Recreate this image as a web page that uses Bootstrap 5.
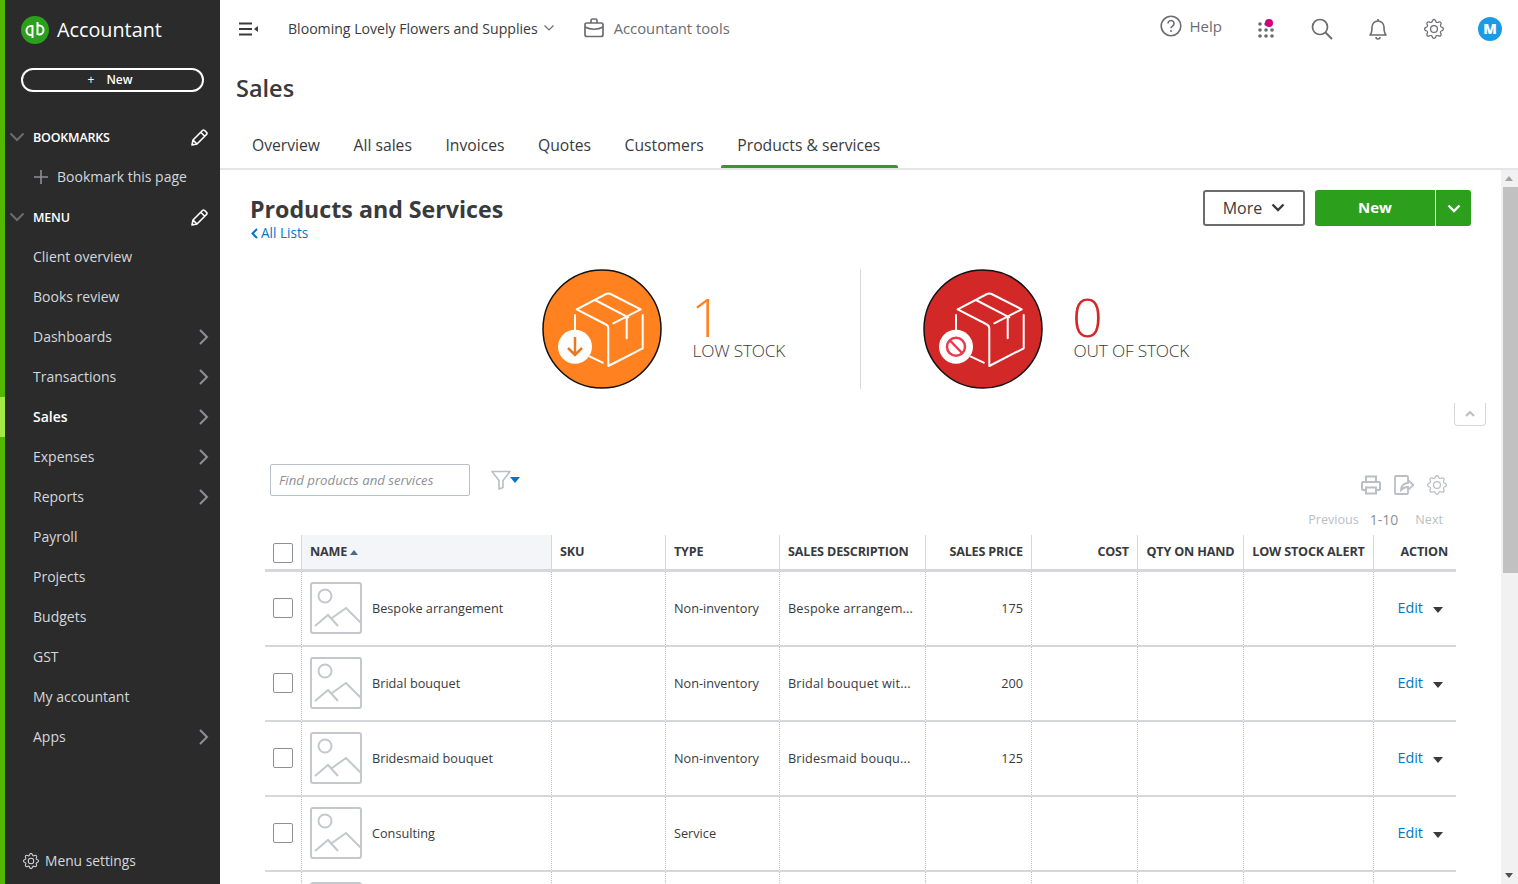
<!doctype html>
<html lang="en">
<head>
<meta charset="utf-8">
<title>Products and Services</title>
<link rel="stylesheet" href="https://cdn.jsdelivr.net/npm/bootstrap@5.3.0/dist/css/bootstrap.min.css">
<style>
html,body{height:884px;overflow:hidden}
body{font-family:"Open Sans","Liberation Sans",sans-serif;color:#393a3d;font-size:14px;background:#fff}
svg{display:block;flex:none}
.qb-side{width:220px;height:884px;flex:none;background:#2b2b2b;border-left:5px solid #53b700;color:#d4d7dc;position:relative}
.qb-brand{height:60px;padding-left:16px;padding-top:16px;color:#fff;font-size:19.8px;gap:8px;line-height:28px}
.qb-new{display:flex;margin:8px 16px 0 16px;width:183px;height:24px;border:2px solid #fff;border-radius:12px;color:#fff;font-size:12px;font-weight:600;align-items:center;justify-content:center;gap:12px;text-decoration:none;line-height:1;padding-right:5px}
.qb-sec{height:40px;padding-left:28px;padding-right:12px;padding-top:2px;display:flex;align-items:center;justify-content:space-between;color:#fff;font-size:12.5px;font-weight:600;position:relative;letter-spacing:-.2px}
.qb-sec>.qb-chev{position:absolute;left:4px;top:15px}
.qb-item{height:40px;padding-left:28px;padding-right:10px;padding-bottom:2px;display:flex;align-items:center;justify-content:space-between;color:#d4d7dc;text-decoration:none;font-size:14px;position:relative}
.qb-item>svg{margin-top:2px}
.qb-active{color:#fff;font-weight:600}
.qb-active::before{content:"";position:absolute;left:-5px;top:0;bottom:0;width:5px;background:#a4e843}
.qb-foot{position:absolute;left:18px;bottom:11px;gap:6px;color:#d4d7dc;line-height:24px;font-size:13.8px}
.qb-main{width:1298px;height:884px;flex:none;display:flex;flex-direction:column}
.qb-top{height:58px;padding-left:18px;padding-right:0;flex:none}
.qb-co{margin-left:30px;font-size:14.1px;font-weight:500;color:#393a3d;gap:6px;padding-bottom:1px}
.qb-tools{margin-left:30px;color:#6b6c72;font-size:14.8px;gap:10px;padding-bottom:2px}
.qb-right{gap:0}
.qb-help{color:#6b6c72;font-size:15px;gap:8px;margin-right:16px}
.qb-ic{width:56px;display:flex;justify-content:center;position:relative}
.qb-dot{position:absolute;left:27px;top:-2px;width:8px;height:8px;border-radius:50%;background:#d0007f}
.qb-avatar{width:24px;height:24px;border-radius:50%;background:#1b9be6;color:#fff;font-weight:800;font-size:14px;line-height:24px;text-align:center}
.qb-title{font-size:23.5px;font-weight:600;color:#393a3d;line-height:32px;margin:14px 0 0 16px;height:35px}
.qb-tabs{height:40px;margin-top:23px;padding-left:16px;border-bottom:2px solid #e3e5e8;flex:none;gap:0}
.qb-tab{padding:0 17.5px 0 16px;height:38px;line-height:30px;color:#393a3d;text-decoration:none;font-size:15.7px;position:relative}
.qb-tab-on::after{content:"";position:absolute;left:0;right:0;bottom:0;height:3px;background:#2ca01c;border-radius:2px 2px 0 0}
.qb-body{flex:1;min-height:0;display:flex;overflow:hidden}
.qb-page{width:1281px;flex:none;overflow:hidden}
.qb-head{padding:24px 30px 0 30px;height:99px}
.qb-h{font-size:23.2px;font-weight:700;line-height:30px;margin:0;color:#393a3d}
.qb-back{color:#0077c5;font-size:13.6px;text-decoration:none;line-height:18px;display:flex;align-items:center;gap:2px;margin-top:0}
.qb-btns{margin-top:-4px}
.qb-more{width:102px;height:36px;border:2px solid #6b6c72;border-radius:3px;background:#fff;color:#393a3d;font-size:16px;gap:9px;padding:0 0 1px 0}
.qb-green{height:36px;background:#2ca01c;color:#fff;border:0;border-radius:3px 0 0 3px;font-weight:700;font-size:15px;width:120px;padding:0 0 2px 0;margin-left:10px}
.qb-caret{height:36px;width:35px;background:#2ca01c;border:0;border-radius:0 3px 3px 0;margin-left:1px;padding:0;display:flex;align-items:center;justify-content:center}
.qb-stats{height:120px;padding-left:322px}
.qb-stat{width:318px;height:120px;gap:30.5px}
.qb-num{font-size:54px;font-weight:300;line-height:50px;margin-top:22px;margin-left:-1.5px}
.qb-lab{font-size:17.3px;font-weight:300;line-height:20px;color:#393a3d;margin-top:0;letter-spacing:-.2px}
.qb-sep{width:1px;height:120px;background:#d4d7dc;margin-right:62px}
.qb-fold{height:75px;padding:14px 15px 0 0}
.qb-foldbtn{width:32px;height:23px;border:1px solid #d4d7dc;border-top:0;border-radius:0 0 4px 4px;display:flex;align-items:center;justify-content:center}
.qb-bar{height:71px;padding-left:50px;padding-right:58px}
.qb-find{width:200px;height:32px;border:1px solid #babec5;border-radius:2px;font-style:italic;font-size:13.2px;padding:0 8px;color:#393a3d;outline:0}
.qb-find::placeholder{color:#8d9096;opacity:1}
.qb-filter{height:32px;margin-left:-3px;gap:2px}
.qb-filter .qb-tri{border-top-color:#0077c5;margin-top:0;margin-left:-3px}
.qb-acts{margin-top:11px;margin-right:-4px;gap:13px;color:#babec5}
.qb-pager{font-size:12.6px;color:#babec5;gap:11px;line-height:18px;margin-top:16px}
.qb-pager b{font-weight:400;font-size:14px;color:#8d9096}
.qb-next{margin-left:6px}
.qb-tbl{margin-left:45px;width:1191px;table-layout:fixed;border-collapse:separate;border-spacing:0;margin-bottom:0;color:#393a3d}
.qb-tbl th{height:37px;padding:0 8px;font-size:12.6px;font-weight:700;color:#393a3d;border-bottom:3px solid #d4d7dc;border-left:1px solid #d4d7dc;vertical-align:middle;white-space:nowrap;letter-spacing:-.17px;background:#fff}
.qb-tbl th:first-child,.qb-tbl td:first-child{border-left:0}
.qb-tbl th.qb-sorted{background:#f4f5f8}
.qb-tbl td{height:75px;padding:0 8px;font-size:12.7px;border-bottom:2px solid #d4d7dc;border-left:1px dotted #babec5;vertical-align:middle;white-space:nowrap;overflow:hidden;text-overflow:ellipsis;background:#fff}
.qb-tbl td>.qb-check{margin-top:-1px;margin-bottom:1px}
.qb-tbl th>.qb-check{margin-top:1px;margin-bottom:-1px}
.qb-tbl td svg{margin-top:-2px}
.qb-tbl td.qb-desc{letter-spacing:.17px}
.qb-num-c{text-align:right}
.qb-name{margin-left:2px}
.qb-check{width:20px;height:20px;border:1px solid #8d9096;border-radius:2px;display:block;margin-left:0;background:#fff}
.qb-edit{color:#0077c5;text-decoration:none;font-size:14.4px;margin-top:-2px}
.qb-act{gap:10px;justify-content:flex-end;padding-right:5px}
.qb-tri{width:0;height:0;border-left:5px solid transparent;border-right:5px solid transparent;border-top:6px solid #393a3d;margin-top:3px}
.qb-scroll{width:17px;flex:none;background:#f1f1f1;position:relative}
.qb-thumb{position:absolute;left:2px;right:0;top:17px;height:386px;background:#c1c1c1}
.qb-up,.qb-dn{position:absolute;left:4px;width:0;height:0;border-left:4px solid transparent;border-right:4px solid transparent}
.qb-up{top:6px;border-bottom:5px solid #a3a3a3}
.qb-dn{bottom:6px;border-top:5px solid #505050}
</style>
</head>
<body>
<svg width="0" height="0" style="position:absolute">
<defs>
<symbol id="i-gear" viewBox="0 0 16 16"><path fill="currentColor" d="M8 4.754a3.246 3.246 0 1 0 0 6.492 3.246 3.246 0 0 0 0-6.492zM5.754 8a2.246 2.246 0 1 1 4.492 0 2.246 2.246 0 0 1-4.492 0z"/><path fill="currentColor" d="M9.796 1.343c-.527-1.79-3.065-1.79-3.592 0l-.094.319a.873.873 0 0 1-1.255.52l-.292-.16c-1.64-.892-3.433.902-2.54 2.541l.159.292a.873.873 0 0 1-.52 1.255l-.319.094c-1.79.527-1.79 3.065 0 3.592l.319.094a.873.873 0 0 1 .52 1.255l-.16.292c-.892 1.64.901 3.434 2.541 2.54l.292-.159a.873.873 0 0 1 1.255.52l.094.319c.527 1.79 3.065 1.79 3.592 0l.094-.319a.873.873 0 0 1 1.255-.52l.292.16c1.64.893 3.434-.902 2.54-2.541l-.159-.292a.873.873 0 0 1 .52-1.255l.319-.094c1.79-.527 1.79-3.065 0-3.592l-.319-.094a.873.873 0 0 1-.52-1.255l.16-.292c.893-1.64-.902-3.433-2.541-2.54l-.292.159a.873.873 0 0 1-1.255-.52l-.094-.319zm-2.633.283c.246-.835 1.428-.835 1.674 0l.094.319a1.873 1.873 0 0 0 2.693 1.115l.291-.16c.764-.415 1.6.42 1.184 1.185l-.159.292a1.873 1.873 0 0 0 1.116 2.692l.318.094c.835.246.835 1.428 0 1.674l-.319.094a1.873 1.873 0 0 0-1.115 2.693l.16.291c.415.764-.42 1.6-1.185 1.184l-.291-.159a1.873 1.873 0 0 0-2.693 1.116l-.094.318c-.246.835-1.428.835-1.674 0l-.094-.319a1.873 1.873 0 0 0-2.692-1.115l-.292.16c-.764.415-1.6-.42-1.184-1.185l.159-.291A1.873 1.873 0 0 0 1.945 8.93l-.319-.094c-.835-.246-.835-1.428 0-1.674l.319-.094A1.873 1.873 0 0 0 3.06 4.377l-.16-.292c-.415-.764.42-1.6 1.185-1.184l.292.159a1.873 1.873 0 0 0 2.692-1.115l.094-.319z"/></symbol>
<symbol id="i-right" viewBox="0 0 12 18"><path d="M2 2l7 7-7 7" fill="none" stroke="#8d9096" stroke-width="2"/></symbol>
<symbol id="i-down" viewBox="0 0 16 10"><path d="M1.500 1.500L8 8l6.500-6.500" fill="none" stroke="#6b6c72" stroke-width="2"/></symbol>
<symbol id="i-pen" viewBox="0 0 18 18"><path d="M2 16l1-5L12.500 1.500a1.500 1.500 0 0 1 2.100 0l1.900 1.900a1.500 1.500 0 0 1 0 2.100L7 15zM3 11l4 4M11 3.500l3.500 3.500" fill="none" stroke="#fff" stroke-width="1.600" stroke-linejoin="round"/></symbol>
<symbol id="i-pic" viewBox="0 0 52 52"><rect x="1" y="1" width="50" height="50" rx="2" fill="#fff" stroke="#c4c7cc" stroke-width="2"/><circle cx="15" cy="14" r="6.500" fill="none" stroke="#c4c7cc" stroke-width="2"/><path d="M5 44l13-11 10 11M22 36l14-10 15 15" fill="none" stroke="#c4c7cc" stroke-width="2"/></symbol>
<symbol id="i-box" viewBox="0 0 120 120"><g fill="none" stroke="#fff" stroke-width="2" stroke-linecap="round" stroke-linejoin="round"><path d="M34.700 40.300L64 25a5 5 0 0 1 4.600 0L98.700 40.300 71.300 54.300M34.700 40.300L63 55a5 5 0 0 1 3.300 5V97L100.700 79.300V46M33 46V61M48 87.700L60.700 93.700M53 31L86.300 48.300M84.700 48V69.300"/></g></symbol>
</defs>
</svg>
<div class="d-flex">
<aside class="qb-side">
  <div class="qb-brand d-flex">
    <svg width="28" height="28" viewBox="0 0 28 28"><circle cx="14" cy="14" r="14" fill="#2ca01c"/><path d="M11.500 9v13M11.500 10H10a4.500 4.500 0 0 0 0 9h1M16.500 6v13M16.500 9.500H18a4.500 4.500 0 0 1 0 9h-1" fill="none" stroke="#fff" stroke-width="2"/></svg>
    <span>Accountant</span>
  </div>
  <a class="qb-new" href="#"><span class="fw-normal">+</span><span>New</span></a>
  <div class="qb-sec" style="margin-top:25px"><svg class="qb-chev" width="16" height="10"><use href="#i-down"/></svg><span>BOOKMARKS</span><svg width="18" height="18"><use href="#i-pen"/></svg></div>
  <a class="qb-item justify-content-start" href="#"><svg width="16" height="16" viewBox="0 0 16 16" class="me-2"><path d="M8 1v14M1 8h14" stroke="#8d9096" stroke-width="1.600"/></svg>Bookmark this page</a>
  <div class="qb-sec"><svg class="qb-chev" width="16" height="10"><use href="#i-down"/></svg><span>MENU</span><svg width="18" height="18"><use href="#i-pen"/></svg></div>
  <a class="qb-item" href="#">Client overview</a>
  <a class="qb-item" href="#">Books review</a>
  <a class="qb-item" href="#">Dashboards<svg width="12" height="18"><use href="#i-right"/></svg></a>
  <a class="qb-item" href="#">Transactions<svg width="12" height="18"><use href="#i-right"/></svg></a>
  <a class="qb-item qb-active" href="#">Sales<svg width="12" height="18"><use href="#i-right"/></svg></a>
  <a class="qb-item" href="#">Expenses<svg width="12" height="18"><use href="#i-right"/></svg></a>
  <a class="qb-item" href="#">Reports<svg width="12" height="18"><use href="#i-right"/></svg></a>
  <a class="qb-item" href="#">Payroll</a>
  <a class="qb-item" href="#">Projects</a>
  <a class="qb-item" href="#">Budgets</a>
  <a class="qb-item" href="#">GST</a>
  <a class="qb-item" href="#">My accountant</a>
  <a class="qb-item" href="#">Apps<svg width="12" height="18"><use href="#i-right"/></svg></a>
  <div class="qb-foot d-flex align-items-center"><svg width="16" height="16"><use href="#i-gear"/></svg>Menu settings</div>
</aside>
<main class="qb-main">
  <header class="qb-top d-flex align-items-center justify-content-between">
    <div class="d-flex align-items-center">
      <svg width="20" height="14" viewBox="0 0 20 14"><path d="M1 1.500h13M1 7h13M1 12.500h13" stroke="#393a3d" stroke-width="1.800"/><path d="M20 4v6l-4-3z" fill="#393a3d"/></svg>
      <div class="qb-co d-flex align-items-center">Blooming Lovely Flowers and Supplies <svg width="10" height="6" viewBox="0 0 10 6"><path d="M.5.500L5 5 9.500.500" fill="none" stroke="#6b6c72" stroke-width="1.200"/></svg></div>
      <div class="qb-tools d-flex align-items-center"><svg width="20" height="20" viewBox="0 0 20 20"><path d="M7 5V2.500A1.500 1.500 0 0 1 8.500 1h3A1.500 1.500 0 0 1 13 2.500V5M2.500 5h15A1.500 1.500 0 0 1 19 6.500v10a2 2 0 0 1-2 2H3a2 2 0 0 1-2-2v-10A1.500 1.500 0 0 1 2.500 5zM1 9c5 3 13 3 18 0" fill="none" stroke="#6b6c72" stroke-width="1.700"/></svg>Accountant tools</div>
    </div>
    <div class="qb-right d-flex align-items-center">
      <div class="qb-help d-flex align-items-center" style="margin-top:-6px"><svg width="22" height="22" viewBox="0 0 22 22"><circle cx="11" cy="11" r="9.800" fill="none" stroke="#6b6c72" stroke-width="1.600"/><path d="M8 8.500a3 3 0 1 1 4.500 2.600c-1 .6-1.500 1-1.500 2.200" fill="none" stroke="#6b6c72" stroke-width="1.600"/><circle cx="11" cy="16" r="1" fill="#6b6c72"/></svg>Help</div>
      <div class="qb-ic"><svg width="18" height="17" viewBox="0 0 18 17" fill="#6b6c72"><circle cx="3" cy="3" r="1.800"/><circle cx="9" cy="3" r="1.800"/><circle cx="3" cy="9" r="1.800"/><circle cx="9" cy="9" r="1.800"/><circle cx="15" cy="9" r="1.800"/><circle cx="3" cy="15" r="1.800"/><circle cx="9" cy="15" r="1.800"/><circle cx="15" cy="15" r="1.800"/></svg><span class="qb-dot"></span></div>
      <div class="qb-ic"><svg width="22" height="22" viewBox="0 0 22 22"><circle cx="9" cy="9" r="7.500" fill="none" stroke="#6b6c72" stroke-width="1.700"/><path d="M14.500 14.500L21 21" stroke="#6b6c72" stroke-width="2"/></svg></div>
      <div class="qb-ic"><svg width="18" height="22" viewBox="0 0 18 22"><path d="M1 17c2-2 2-4 2-8a6 6 0 0 1 12 0c0 4 0 6 2 8zM9 1v2M7 19a2 2 0 0 0 4 0" fill="none" stroke="#6b6c72" stroke-width="1.600" stroke-linejoin="round"/></svg></div>
      <div class="qb-ic" style="color:#6b6c72"><svg width="20" height="20"><use href="#i-gear"/></svg></div>
      <div class="qb-ic"><div class="qb-avatar">M</div></div>
    </div>
  </header>
  <div class="qb-title">Sales</div>
  <nav class="qb-tabs d-flex">
    <a class="qb-tab" href="#">Overview</a><a class="qb-tab" href="#">All sales</a><a class="qb-tab" href="#">Invoices</a><a class="qb-tab" href="#">Quotes</a><a class="qb-tab" href="#">Customers</a><a class="qb-tab qb-tab-on" href="#">Products &amp; services</a>
  </nav>
  <div class="qb-body">
    <div class="qb-page">
      <div class="qb-head d-flex justify-content-between align-items-start">
        <div>
          <h1 class="qb-h">Products and Services</h1>
          <a class="qb-back" href="#"><svg width="9" height="11" viewBox="0 0 9 11"><path d="M7 1L2.500 5.500 7 10" fill="none" stroke="#0077c5" stroke-width="2"/></svg>All Lists</a>
        </div>
        <div class="qb-btns d-flex">
          <button class="btn qb-more d-flex align-items-center justify-content-center" type="button">More <svg width="14" height="9" viewBox="0 0 14 9"><path d="M1.500 1.500L7 7l5.500-5.500" fill="none" stroke="#393a3d" stroke-width="2.400"/></svg></button>
          <button class="btn qb-green" type="button">New</button>
          <button class="btn qb-caret" type="button" aria-label="More new options"><svg width="14" height="9" viewBox="0 0 14 9"><path d="M1.500 1.500L7 7l5.500-5.500" fill="none" stroke="#fff" stroke-width="2.400"/></svg></button>
        </div>
      </div>
      <div class="qb-stats d-flex">
        <div class="qb-stat d-flex">
          <svg width="120" height="120" viewBox="0 0 120 120"><circle cx="60" cy="60" r="59" fill="#ff8120" stroke="#111" stroke-width="1.500"/><use href="#i-box"/><circle cx="33" cy="77.700" r="17" fill="#fff"/><path d="M33 68v18M26 79l7 7 7-7" fill="none" stroke="#e87a24" stroke-width="2.500"/></svg>
          <div><div class="qb-num" style="color:#ff8120">1</div><div class="qb-lab">LOW STOCK</div></div>
        </div>
        <div class="qb-sep"></div>
        <div class="qb-stat d-flex">
          <svg width="120" height="120" viewBox="0 0 120 120"><circle cx="60" cy="60" r="59" fill="#d22828" stroke="#111" stroke-width="1.500"/><use href="#i-box"/><circle cx="33" cy="77.700" r="17" fill="#fff"/><circle cx="33" cy="77.700" r="9" fill="none" stroke="#f0384d" stroke-width="2.500"/><path d="M27 71.500L39 84" stroke="#f0384d" stroke-width="2.500"/></svg>
          <div><div class="qb-num" style="color:#d22828">0</div><div class="qb-lab">OUT OF STOCK</div></div>
        </div>
      </div>
      <div class="qb-fold d-flex justify-content-end"><div class="qb-foldbtn"><svg width="10" height="6" viewBox="0 0 10 6"><path d="M1 5l4-4 4 4" fill="none" stroke="#babec5" stroke-width="2"/></svg></div></div>
      <div class="qb-bar d-flex justify-content-between">
        <div class="d-flex align-items-start gap-4">
          <input class="qb-find" type="text" placeholder="Find products and services" aria-label="Find products and services">
          <div class="qb-filter d-flex align-items-center"><svg width="20" height="20" viewBox="0 0 20 20"><path d="M1 1.500h18l-7 9v7l-4 1.500v-8.500z" fill="none" stroke="#babec5" stroke-width="1.600" stroke-linejoin="round"/></svg><span class="qb-tri"></span></div>
        </div>
        <div class="d-flex flex-column align-items-end">
          <div class="qb-acts d-flex"><svg width="20" height="20" viewBox="0 0 20 20"><path d="M5 7V1.500h10V7M5 15H2a1 1 0 0 1-1-1V8a1 1 0 0 1 1-1h16a1 1 0 0 1 1 1v6a1 1 0 0 1-1 1h-3M5 12.500h10v6H5z" fill="none" stroke="#babec5" stroke-width="2"/></svg><svg width="20" height="20" viewBox="0 0 20 20"><path d="M14 7V2a1 1 0 0 0-1-1H2a1 1 0 0 0-1 1v16a1 1 0 0 0 1 1h11a1 1 0 0 0 1-1v-2M7 15c0-4 3-7 7-7V5l5.500 5-5.500 5v-3c-3 0-5 1-7 3z" fill="none" stroke="#babec5" stroke-width="1.800"/></svg><svg width="20" height="20"><use href="#i-gear"/></svg></div>
          <div class="qb-pager d-flex"><span>Previous</span><b>1-10</b><span class="qb-next">Next</span></div>
        </div>
      </div>
      <table class="qb-tbl">
        <colgroup><col style="width:36px"><col style="width:250px"><col style="width:114px"><col style="width:114px"><col style="width:146px"><col style="width:106px"><col style="width:106px"><col style="width:106px"><col style="width:130px"><col style="width:83px"></colgroup>
        <thead><tr><th><span class="qb-check"></span></th><th class="qb-sorted">NAME <svg class="d-inline-block" style="vertical-align:1px" width="8" height="5" viewBox="0 0 8 5"><path d="M4 0l4 5H0z" fill="#4d6a85"/></svg></th><th>SKU</th><th>TYPE</th><th>SALES DESCRIPTION</th><th class="qb-num-c">SALES PRICE</th><th class="qb-num-c">COST</th><th class="text-center">QTY ON HAND</th><th class="text-center">LOW STOCK ALERT</th><th class="qb-num-c">ACTION</th></tr></thead>
        <tbody>
          <tr><td><span class="qb-check"></span></td><td><div class="d-flex align-items-center gap-2"><svg width="52" height="52"><use href="#i-pic"/></svg><span class="qb-name">Bespoke arrangement</span></div></td><td></td><td>Non-inventory</td><td class="qb-desc">Bespoke arrangem...</td><td class="qb-num-c">175</td><td></td><td></td><td></td><td><div class="qb-act d-flex align-items-center"><a class="qb-edit" href="#">Edit</a><span class="qb-tri"></span></div></td></tr>
          <tr><td><span class="qb-check"></span></td><td><div class="d-flex align-items-center gap-2"><svg width="52" height="52"><use href="#i-pic"/></svg><span class="qb-name">Bridal bouquet</span></div></td><td></td><td>Non-inventory</td><td class="qb-desc">Bridal bouquet wit...</td><td class="qb-num-c">200</td><td></td><td></td><td></td><td><div class="qb-act d-flex align-items-center"><a class="qb-edit" href="#">Edit</a><span class="qb-tri"></span></div></td></tr>
          <tr><td><span class="qb-check"></span></td><td><div class="d-flex align-items-center gap-2"><svg width="52" height="52"><use href="#i-pic"/></svg><span class="qb-name">Bridesmaid bouquet</span></div></td><td></td><td>Non-inventory</td><td class="qb-desc">Bridesmaid bouqu...</td><td class="qb-num-c">125</td><td></td><td></td><td></td><td><div class="qb-act d-flex align-items-center"><a class="qb-edit" href="#">Edit</a><span class="qb-tri"></span></div></td></tr>
          <tr><td><span class="qb-check"></span></td><td><div class="d-flex align-items-center gap-2"><svg width="52" height="52"><use href="#i-pic"/></svg><span class="qb-name">Consulting</span></div></td><td></td><td>Service</td><td></td><td></td><td></td><td></td><td></td><td><div class="qb-act d-flex align-items-center"><a class="qb-edit" href="#">Edit</a><span class="qb-tri"></span></div></td></tr>
          <tr><td></td><td><div class="d-flex align-items-center gap-2"><svg width="52" height="52"><use href="#i-pic"/></svg></div></td><td></td><td></td><td></td><td></td><td></td><td></td><td></td><td></td></tr>
        </tbody>
      </table>
    </div>
    <div class="qb-scroll"><span class="qb-up"></span><div class="qb-thumb"></div><span class="qb-dn"></span></div>
  </div>
</main>
</div>
</body>
</html>
